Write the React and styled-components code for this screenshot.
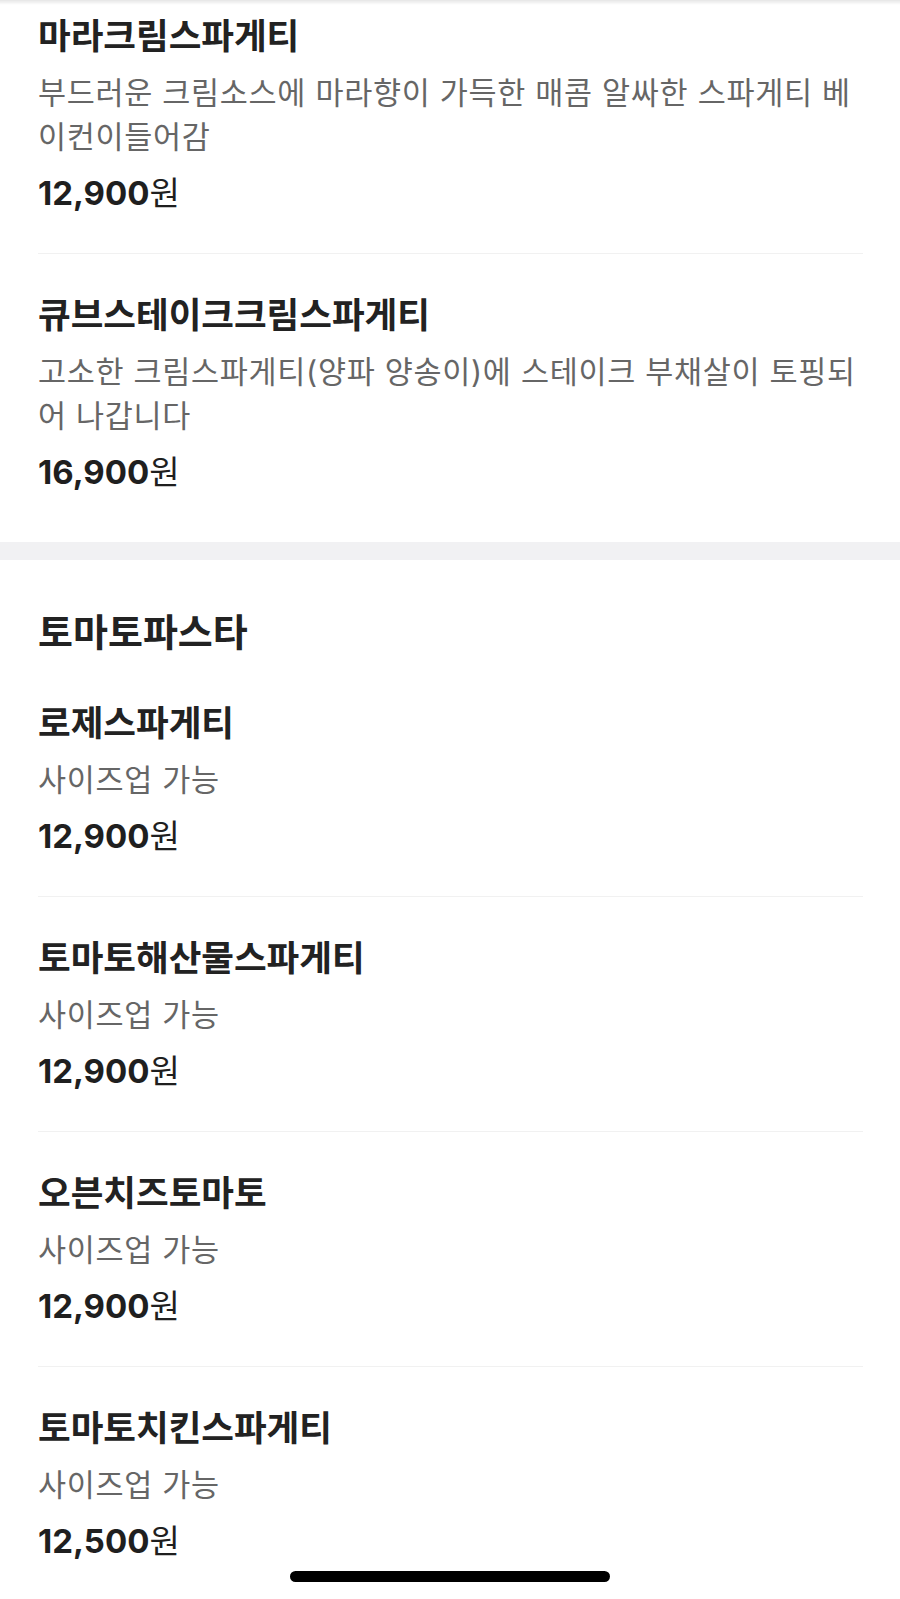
import styled, { createGlobalStyle } from "styled-components";

const GlobalStyle = createGlobalStyle`
  body {
    margin: 0;
    background: #ffffff;
    font-family: "Inter", "Noto Sans CJK KR", "Noto Sans", sans-serif;
    color: #222222;
  }
`;

const TopShadow = styled.div`
  position: fixed;
  top: 0;
  left: 0;
  right: 0;
  height: 5px;
  background: linear-gradient(#e6e6e6, rgba(255, 255, 255, 0));
  z-index: 2;
`;

const HomeIndicator = styled.div`
  position: fixed;
  bottom: 17px;
  left: 50%;
  width: 320px;
  height: 11px;
  margin-left: -160px;
  border-radius: 6px;
  background: #000000;
  z-index: 2;
`;

const Section = styled.section`
  padding: ${(p) => (p.$heading ? "50px" : "0")} 37px 9px 38px;
  margin-top: ${(p) => (p.$scrolled ? "-25px" : "0")};
`;

const SectionGap = styled.div`
  height: 18px;
  background: #f1f1f3;
`;

const Heading = styled.h2`
  margin: 0 0 8px;
  font-size: 38px;
  line-height: 44px;
  font-weight: 600;
  color: #222222;
`;

const Item = styled.div`
  padding: 40px 0 38px;
  border-bottom: 1px solid #f1f1f1;
  display: flex;
  flex-direction: column;
  gap: 12px;

  &:last-child {
    border-bottom: none;
    padding-bottom: 39px;
  }
`;

const Title = styled.h3`
  margin: 0;
  font-size: 35.5px;
  line-height: 44px;
  font-weight: 600;
  color: #222222;
`;

const Desc = styled.p`
  margin: 0;
  font-size: 30.5px;
  line-height: 44px;
  font-weight: 400;
  letter-spacing: 0.7px;
  color: #666666;
`;

const DescLine = styled.span`
  display: block;
  white-space: nowrap;
`;

const Price = styled.div`
  font-size: 33px;
  line-height: 44px;
  font-weight: 700;
  color: #1f1f1f;

  span {
    font-weight: 400;
  }
`;

const creamPasta = [
  {
    name: "마라크림스파게티",
    desc: ["부드러운 크림소스에 마라향이 가득한 매콤 알싸한 스파게티 베", "이컨이들어감"],
    price: "12,900",
  },
  {
    name: "큐브스테이크크림스파게티",
    desc: ["고소한 크림스파게티(양파 양송이)에 스테이크 부채살이 토핑되", "어 나갑니다"],
    price: "16,900",
  },
];

const tomatoPasta = [
  { name: "로제스파게티", desc: ["사이즈업 가능"], price: "12,900" },
  { name: "토마토해산물스파게티", desc: ["사이즈업 가능"], price: "12,900" },
  { name: "오븐치즈토마토", desc: ["사이즈업 가능"], price: "12,900" },
  { name: "토마토치킨스파게티", desc: ["사이즈업 가능"], price: "12,500" },
];

const MenuItem = ({ item }) => (
  <Item>
    <Title>{item.name}</Title>
    <Desc>
      {item.desc.map((line, i) => (
        <DescLine key={i}>{line}</DescLine>
      ))}
    </Desc>
    <Price>
      {item.price}
      <span>원</span>
    </Price>
  </Item>
);

const App = () => {
  return (
    <>
      <GlobalStyle />
      <TopShadow />
      <Section $scrolled>
        {creamPasta.map((item, i) => (
          <MenuItem key={i} item={item} />
        ))}
      </Section>
      <SectionGap />
      <Section $heading>
        <Heading>토마토파스타</Heading>
        {tomatoPasta.map((item, i) => (
          <MenuItem key={i} item={item} />
        ))}
      </Section>
      <HomeIndicator />
    </>
  );
};

export default App;
